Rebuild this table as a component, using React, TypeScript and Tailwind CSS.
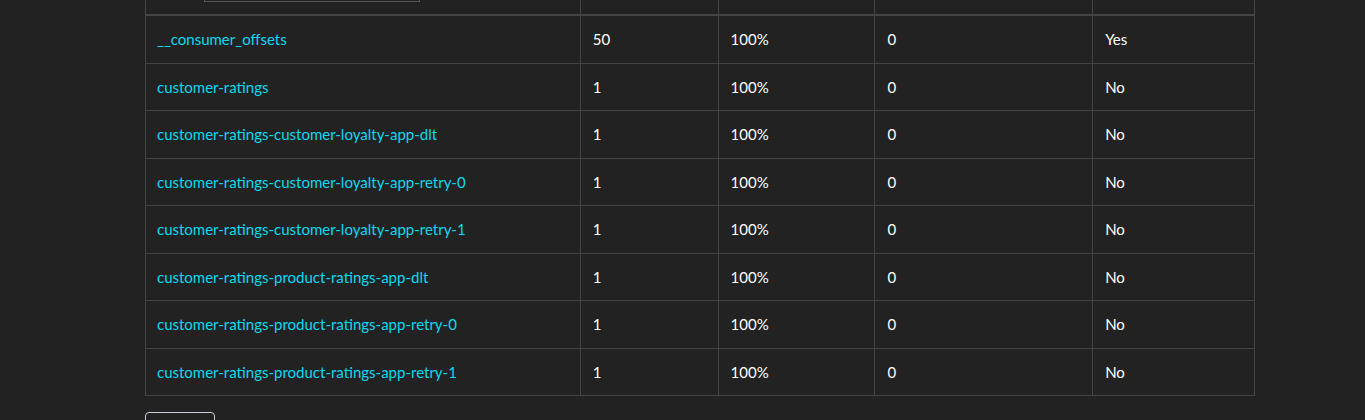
import React from "react";

const rows: [string, string, string, string, string][] = [
  ["__consumer_offsets", "50", "100%", "0", "Yes"],
  ["customer-ratings", "1", "100%", "0", "No"],
  ["customer-ratings-customer-loyalty-app-dlt", "1", "100%", "0", "No"],
  ["customer-ratings-customer-loyalty-app-retry-0", "1", "100%", "0", "No"],
  ["customer-ratings-customer-loyalty-app-retry-1", "1", "100%", "0", "No"],
  ["customer-ratings-product-ratings-app-dlt", "1", "100%", "0", "No"],
  ["customer-ratings-product-ratings-app-retry-0", "1", "100%", "0", "No"],
  ["customer-ratings-product-ratings-app-retry-1", "1", "100%", "0", "No"],
];

export default function App() {
  return (
    <div
      className="min-h-[420px] bg-[#222222] text-white text-[15px] leading-[1.5]"
      style={{ fontFamily: "Lato, 'Noto Sans', sans-serif" }}
    >
      <div className="ml-[145px] w-[1110px]">
        <table className="w-full border-collapse border border-t-0 border-[#444444]">
          <colgroup>
            <col className="w-[435px]" />
            <col className="w-[138px]" />
            <col className="w-[157px]" />
            <col className="w-[218px]" />
            <col className="w-[162px]" />
          </colgroup>
          <thead>
            <tr>
              <th className="p-0 border-x border-[#444444] border-b-2 border-b-[#444444] text-left align-top">
                <div className="h-[14px]">
                  <div className="ml-[58px] w-[216px] h-[2px] border-x border-b border-[#555555]" />
                </div>
              </th>
              <th className="p-0 border-x border-[#444444] border-b-2 border-b-[#444444]" />
              <th className="p-0 border-x border-[#444444] border-b-2 border-b-[#444444]" />
              <th className="p-0 border-x border-[#444444] border-b-2 border-b-[#444444]" />
              <th className="p-0 border-x border-[#444444] border-b-2 border-b-[#444444]" />
            </tr>
          </thead>
          <tbody>
            {rows.map((r) => (
              <tr key={r[0]}>
                <td className="pl-[11px] pr-3 py-3 border border-[#444444]">
                  <a className="text-[#0ad9f0] cursor-pointer">{r[0]}</a>
                </td>
                <td className="px-3 py-3 border border-[#444444]">{r[1]}</td>
                <td className="px-3 py-3 border border-[#444444]">{r[2]}</td>
                <td className="px-3 py-3 border border-[#444444]">{r[3]}</td>
                <td className="px-3 py-3 border border-[#444444]">{r[4]}</td>
              </tr>
            ))}
          </tbody>
        </table>
        <div className="mt-4">
          <button className="w-[70px] h-[38px] rounded-[4px] border border-[#cfcbd6] bg-transparent text-white">
            &nbsp;
          </button>
        </div>
      </div>
    </div>
  );
}
